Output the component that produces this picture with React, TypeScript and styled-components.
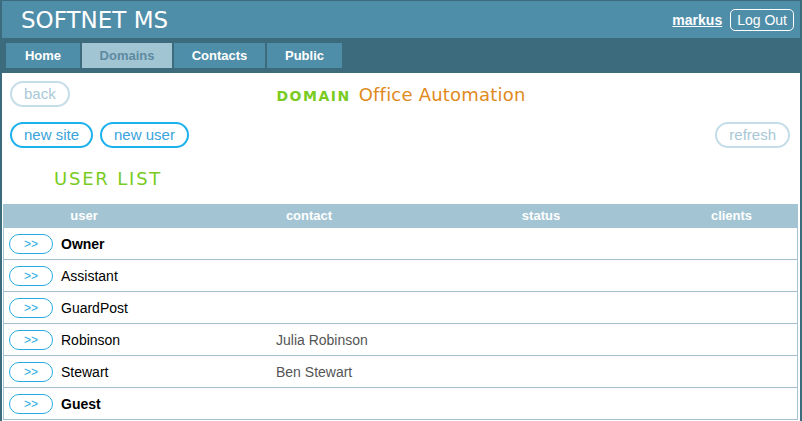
import React from "react";
import styled, { createGlobalStyle } from "styled-components";

const Global = createGlobalStyle`
  html, body { margin: 0; padding: 0; background: #fff; }
  body { font-family: "Liberation Sans", Arial, sans-serif; }
`;

const Frame = styled.div`
  width: 802px;
  box-sizing: border-box;
  min-height: 421px;
  border-style: solid;
  border-color: #3d6b7e;
  border-width: 1px 2px 0 2px;
  background: #fff;
`;

const Header = styled.header`
  height: 37px;
  background: #4f8ea8;
  display: flex;
  align-items: center;
  justify-content: space-between;
  padding: 0 6px 0 19px;
`;

const Brand = styled.div`
  font-family: "DejaVu Sans", Verdana, sans-serif;
  font-size: 23px;
  color: #fff;
`;

const UserBox = styled.div`
  display: flex;
  align-items: center;
  gap: 8px;
`;

const UserName = styled.a`
  color: #fff;
  font-weight: bold;
  font-size: 14px;
  text-decoration: underline;
`;

const LogOut = styled.button`
  height: 22px;
  padding: 0 6px;
  border: 1px solid #fff;
  border-radius: 5px;
  background: transparent;
  color: #fff;
  font-family: "Liberation Sans", Arial, sans-serif;
  font-size: 14px;
  line-height: 20px;
`;

const Nav = styled.nav`
  background: #3d6b7e;
  display: flex;
  gap: 2px;
  padding: 5px 4px;
`;

const Tab = styled.div<{ $w: number; $active?: boolean }>`
  width: ${(p) => p.$w}px;
  height: 25px;
  display: flex;
  align-items: center;
  justify-content: center;
  font-size: 13px;
  font-weight: bold;
  color: ${(p) => (p.$active ? "#5d8aa0" : "#fff")};
  background: ${(p) => (p.$active ? "#a2c5d4" : "#4f8ea8")};
`;

const Controls = styled.div`
  padding: 8px 10px 0 8px;
`;

const TopRow = styled.div`
  display: grid;
  grid-template-columns: 1fr auto 1fr;
  align-items: center;
`;

const Pill = styled.button<{ $muted?: boolean }>`
  height: 26px;
  box-sizing: border-box;
  padding: 0 12px;
  border-radius: 13px;
  border: 2px solid ${(p) => (p.$muted ? "#c4dde8" : "#1db1ed")};
  background: #fff;
  color: ${(p) => (p.$muted ? "#a8c8d7" : "#3aa3db")};
  font-family: "Liberation Sans", Arial, sans-serif;
  font-size: 15px;
  line-height: 22px;
  justify-self: start;
`;

const Title = styled.div`
  font-family: "DejaVu Sans", Verdana, sans-serif;
  display: flex;
  align-items: baseline;
  gap: 8px;
  margin-left: 2px;
`;

const TitleKind = styled.span`
  color: #79cb1f;
  font-size: 14px;
  font-weight: bold;
  letter-spacing: 1.5px;
`;

const TitleName = styled.span`
  color: #e08a1c;
  font-size: 18px;
  letter-spacing: 0.2px;
`;

const ActionRow = styled.div`
  margin-top: 15px;
  display: flex;
  justify-content: space-between;
  align-items: center;
`;

const ActionGroup = styled.div`
  display: flex;
  gap: 7px;
`;

const Section = styled.h2`
  margin: 20px 0 14px 44px;
  font-family: "DejaVu Sans", Verdana, sans-serif;
  font-weight: normal;
  font-size: 18px;
  line-height: 22px;
  letter-spacing: 1.8px;
  color: #79cb1f;
`;

const Table = styled.div`
  margin: 0 2px 0 1px;
`;

const HeadRow = styled.div`
  display: grid;
  grid-template-columns: 162px 288px 176px 1fr;
  height: 24px;
  background: #a3c5d3;
`;

const HeadCell = styled.div<{ $shift?: number }>`
  text-align: center;
  color: #fff;
  font-weight: bold;
  font-size: 13px;
  line-height: 24px;
  padding-left: ${(p) => p.$shift ?? 0}px;
`;

const Body = styled.div`
  border-left: 1px solid #a3c5d3;
  border-right: 1px solid #a3c5d3;
`;

const Row = styled.div`
  display: grid;
  grid-template-columns: 267px 1fr;
  align-items: center;
  height: 31px;
  padding-left: 5px;
  border-bottom: 1px solid #a0bfcc;
`;

const UserCell = styled.div`
  display: flex;
  align-items: center;
  gap: 8px;
`;

const OpenBtn = styled.button`
  width: 44px;
  height: 20px;
  box-sizing: border-box;
  border: 1px solid #29abe2;
  border-radius: 10px;
  background: #fff;
  color: #29abe2;
  font-family: "Liberation Sans", Arial, sans-serif;
  font-size: 12px;
  line-height: 18px;
  padding: 0;
`;

const Name = styled.span<{ $bold?: boolean }>`
  font-size: 14px;
  color: #000;
  font-weight: ${(p) => (p.$bold ? "bold" : "normal")};
`;

const Contact = styled.span`
  font-size: 14px;
  color: #555;
`;

const users = [
  { name: "Owner", bold: true, contact: "" },
  { name: "Assistant", contact: "" },
  { name: "GuardPost", contact: "" },
  { name: "Robinson", contact: "Julia Robinson" },
  { name: "Stewart", contact: "Ben Stewart" },
  { name: "Guest", bold: true, contact: "" },
];

export default function App() {
  return (
    <>
      <Global />
      <Frame>
        <Header>
          <Brand>SOFTNET MS</Brand>
          <UserBox>
            <UserName>markus</UserName>
            <LogOut>Log Out</LogOut>
          </UserBox>
        </Header>
        <Nav>
          <Tab $w={74}>Home</Tab>
          <Tab $w={90} $active>Domains</Tab>
          <Tab $w={91}>Contacts</Tab>
          <Tab $w={75}>Public</Tab>
        </Nav>
        <Controls>
          <TopRow>
            <Pill $muted>back</Pill>
            <Title>
              <TitleKind>DOMAIN</TitleKind>
              <TitleName>Office Automation</TitleName>
            </Title>
            <span />
          </TopRow>
          <ActionRow>
            <ActionGroup>
              <Pill>new site</Pill>
              <Pill>new user</Pill>
            </ActionGroup>
            <Pill $muted>refresh</Pill>
          </ActionRow>
          <Section>USER LIST</Section>
        </Controls>
        <Table>
          <HeadRow>
            <HeadCell>user</HeadCell>
            <HeadCell>contact</HeadCell>
            <HeadCell>status</HeadCell>
            <HeadCell $shift={36}>clients</HeadCell>
          </HeadRow>
          <Body>
            {users.map((u) => (
              <Row key={u.name}>
                <UserCell>
                  <OpenBtn>&gt;&gt;</OpenBtn>
                  <Name $bold={u.bold}>{u.name}</Name>
                </UserCell>
                <Contact>{u.contact}</Contact>
              </Row>
            ))}
          </Body>
        </Table>
      </Frame>
    </>
  );
}
